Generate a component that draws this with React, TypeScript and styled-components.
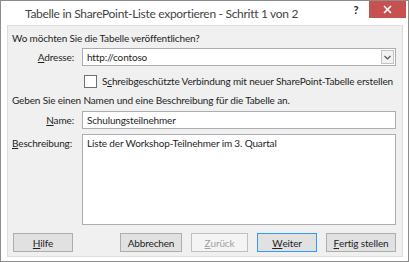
import React from "react";
import styled, { createGlobalStyle } from "styled-components";

const GlobalStyle = createGlobalStyle`
  html, body {
    margin: 0;
    padding: 0;
    background: #ffffff;
  }
  body {
    font-family: Lato, "Noto Sans", Arial, sans-serif;
  }
`;

const Window = styled.div`
  width: 409px;
  height: 262px;
  box-sizing: border-box;
  border: 1px solid #8c8c8c;
  background: #ffffff;
  display: flex;
  flex-direction: column;
  color: #1e1e1e;
  overflow: hidden;
`;

const TitleBar = styled.div`
  height: 24px;
  display: flex;
  align-items: flex-start;
  flex-shrink: 0;
`;

const Title = styled.div`
  flex: 1;
  padding: 4px 0 0 24px;
  font-size: 12px;
  letter-spacing: -0.3px;
  line-height: 18px;
  color: #444444;
  white-space: nowrap;
`;

const HelpGlyph = styled.div`
  width: 16px;
  padding-top: 2px;
  font-size: 11px;
  font-weight: 700;
  line-height: 14px;
  color: #222222;
  text-align: center;
`;

const CloseButton = styled.div`
  width: 37px;
  height: 18px;
  margin: -1px 2px 0 5px;
  background: #c75050;
  display: flex;
  align-items: center;
  justify-content: center;
`;

const Body = styled.div`
  flex: 1;
  display: flex;
  padding: 0 5px 6px 6px;
  min-width: 0;
`;

const Panel = styled.div`
  flex: 1;
  min-width: 0;
  border: 1px solid #dcdcdc;
  background: #f0f0f0;
  padding: 5px 5px 4px 4px;
  display: flex;
  flex-direction: column;
  font-size: 10px;
  letter-spacing: -0.15px;
`;

const Heading = styled.div<{ $top: number }>`
  margin-top: ${({ $top }) => $top}px;
  line-height: 14px;
  height: 14px;
  white-space: nowrap;
`;

const FieldRow = styled.div<{ $top: number }>`
  margin-top: ${({ $top }) => $top}px;
  display: grid;
  grid-template-columns: 62px minmax(0, 1fr);
  column-gap: 8px;
  align-items: start;
`;

const Label = styled.div<{ $align?: string }>`
  text-align: ${({ $align }) => $align || "right"};
  line-height: 14px;
  padding-top: 2px;
  white-space: nowrap;
`;

const Field = styled.div<{ $height: number }>`
  height: ${({ $height }) => $height}px;
  box-sizing: border-box;
  border: 1px solid #abadb3;
  background: #ffffff;
  padding: 1px 4px;
  line-height: 14px;
  display: flex;
  align-items: flex-start;
  white-space: nowrap;
  margin-right: 1px;
`;

const FieldText = styled.span`
  flex: 1;
`;

const DropButton = styled.div`
  width: 13px;
  height: 14px;
  margin-right: -3px;
  box-sizing: border-box;
  border: 1px solid #c4c4c4;
  background: #f2f2f2;
  display: flex;
  align-items: center;
  justify-content: center;
`;

const CheckRow = styled.div`
  margin-top: 8px;
  margin-left: 72px;
  display: flex;
  align-items: center;
  gap: 5px;
  height: 14px;
  white-space: nowrap;
`;

const CheckBox = styled.div`
  width: 13px;
  height: 13px;
  box-sizing: border-box;
  border: 1px solid #707070;
  background: #ffffff;
  flex-shrink: 0;
`;

const ButtonBar = styled.div`
  margin-top: 8px;
  display: flex;
  justify-content: space-between;
  padding: 0 1px 0 1px;
`;

const ButtonGroup = styled.div`
  display: flex;
  gap: 9px;
`;

const Button = styled.div<{ $width: number; $primary?: boolean; $disabled?: boolean }>`
  width: ${({ $width }) => $width}px;
  height: 19px;
  box-sizing: border-box;
  border: 1px solid ${({ $primary, $disabled }) =>
    $primary ? "#3399ff" : $disabled ? "#bfbfbf" : "#adadad"};
  background: ${({ $disabled }) => ($disabled ? "#f4f4f4" : "#e1e1e1")};
  color: ${({ $disabled }) => ($disabled ? "#a0a0a0" : "#1e1e1e")};
  display: flex;
  align-items: center;
  justify-content: center;
  line-height: 14px;
  white-space: nowrap;
`;

const Key = styled.span`
  text-decoration: underline;
`;

export default function App() {
  return (
    <>
      <GlobalStyle />
      <Window>
        <TitleBar>
          <Title>Tabelle in SharePoint-Liste exportieren - Schritt 1 von 2</Title>
          <HelpGlyph>?</HelpGlyph>
          <CloseButton>
            <svg width="9" height="9" viewBox="0 0 9 9">
              <path d="M1 1L8 8M8 1L1 8" stroke="#ffffff" strokeWidth="1.6" />
            </svg>
          </CloseButton>
        </TitleBar>
        <Body>
          <Panel>
            <Heading $top={0}>Wo möchten Sie die Tabelle veröffentlichen?</Heading>
            <FieldRow $top={3}>
              <Label>
                <Key>A</Key>dresse:
              </Label>
              <Field $height={18}>
                <FieldText>http://contoso</FieldText>
                <DropButton>
                  <svg width="7" height="5" viewBox="0 0 7 5">
                    <path d="M0.5 1L3.5 4L6.5 1" stroke="#555555" strokeWidth="1.2" fill="none" />
                  </svg>
                </DropButton>
              </Field>
            </FieldRow>
            <CheckRow>
              <CheckBox />
              <span>
                S<Key>c</Key>hreibgeschützte Verbindung mit neuer SharePoint-Tabelle erstellen
              </span>
            </CheckRow>
            <Heading $top={5}>Geben Sie einen Namen und eine Beschreibung für die Tabelle an.</Heading>
            <FieldRow $top={4}>
              <Label>
                <Key>N</Key>ame:
              </Label>
              <Field $height={18}>
                <FieldText>Schulungsteilnehmer</FieldText>
              </Field>
            </FieldRow>
            <FieldRow $top={5}>
              <Label $align="left">
                <Key>B</Key>eschreibung:
              </Label>
              <Field $height={91}>
                <FieldText>Liste der Workshop-Teilnehmer im 3. Quartal</FieldText>
              </Field>
            </FieldRow>
            <ButtonBar>
              <Button $width={60}>
                <Key>H</Key>ilfe
              </Button>
              <ButtonGroup>
                <Button $width={62}>Abbrechen</Button>
                <Button $width={57} $disabled>
                  <Key>Z</Key>urück
                </Button>
                <Button $width={60} $primary>
                  <Key>W</Key>eiter
                </Button>
                <Button $width={70}>
                  <Key>F</Key>ertig stellen
                </Button>
              </ButtonGroup>
            </ButtonBar>
          </Panel>
        </Body>
      </Window>
    </>
  );
}
